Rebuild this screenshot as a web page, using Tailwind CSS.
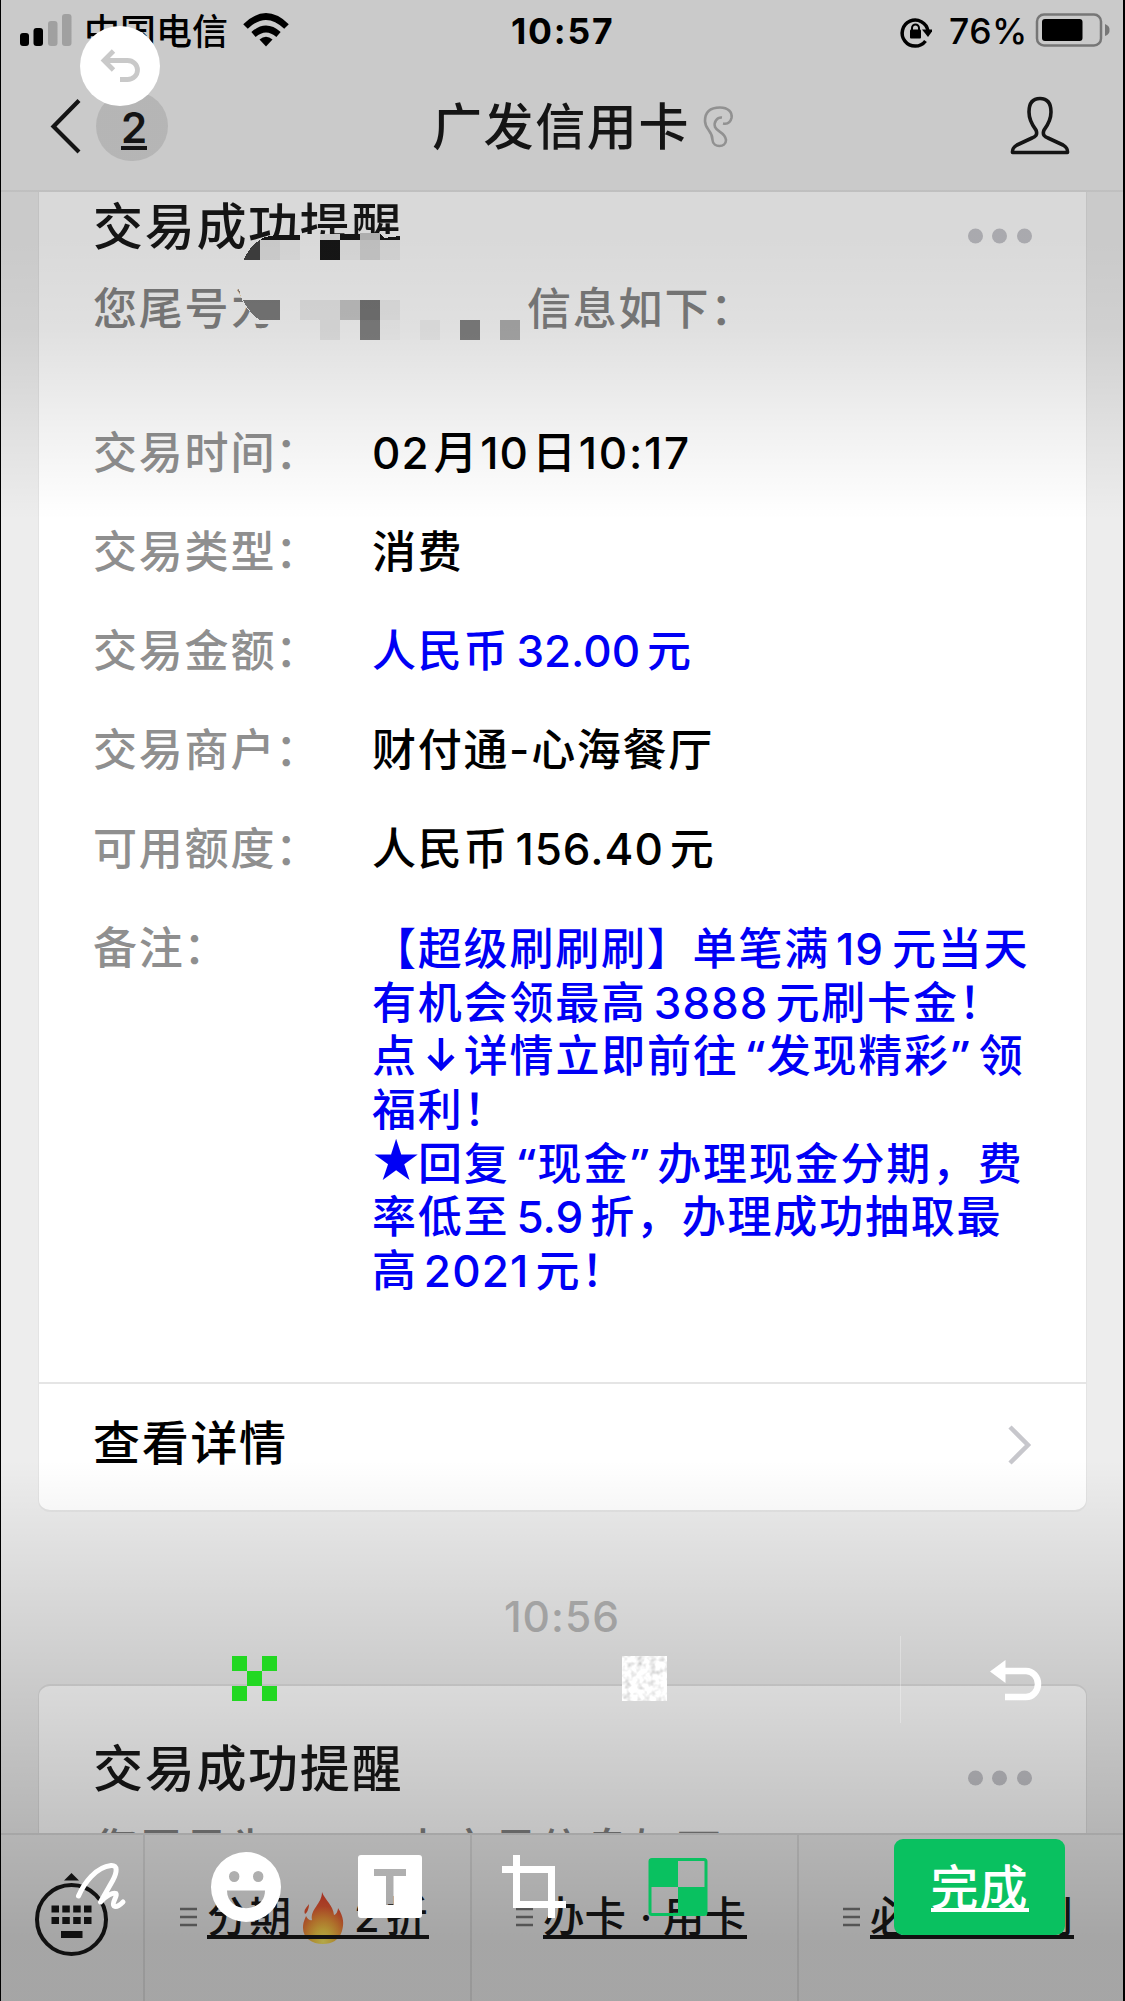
<!DOCTYPE html>
<html lang="zh-CN">
<head>
<meta charset="utf-8">
<title>广发信用卡</title>
<script src="https://cdn.jsdelivr.net/npm/@tailwindcss/browser@4"></script>
</head>
<body class="bg-[#ededed]">
<div class="relative flex h-[2001px] w-[1125px] flex-col overflow-hidden border-l border-r-2 border-black bg-[#ededed] font-['Inter','Noto_Sans_CJK_SC',sans-serif] text-black">

  <!-- status bar -->
  <div class="flex h-[62px] shrink-0 items-center pl-[19px]">
    <svg class="h-[62px] w-[64px] shrink-0" viewBox="20 0 64 62"><rect x="20" y="33" width="9" height="13" rx="3"/><rect x="33.5" y="28" width="9.5" height="18" rx="3"/><rect x="48" y="21" width="9.5" height="25" rx="3" fill="#bcbcbc"/><rect x="62" y="14" width="9.5" height="32" rx="3" fill="#bcbcbc"/></svg>
    <div class="mt-[2px] w-[159px] shrink-0 text-[36px] leading-[62px] font-medium whitespace-nowrap">中国电信</div>
    <svg class="h-[62px] w-[46px] shrink-0" viewBox="243 0 46 62"><g fill="none" stroke="#000" stroke-width="6.5"><path d="M245.500 26.500Q266 6.500 286.500 26.500"/><path d="M253.500 34.500Q266 23.500 278.500 34.500"/></g><path d="M266 46.500L259.500 39.500Q266 34 272.500 39.500Z"/></svg>
    <div class="mt-[1px] ml-[222px] w-[387px] shrink-0 text-[35.500px] leading-[62px] font-bold tracking-[1.800px]">10:57</div>
    <svg class="h-[62px] w-[34px] shrink-0" viewBox="898 0 34 62"><path d="M925.500 41A13 13 0 1 1 928 31" fill="none" stroke="#000" stroke-width="3.500"/><path d="M922 29.500H933.500L928 37Z"/><rect x="910" y="29.500" width="11" height="9" rx="1"/><path d="M912 30V28a3.500 3.500 0 0 1 7 0V30" fill="none" stroke="#000" stroke-width="2"/></svg>
    <div class="mt-[1px] ml-[17px] w-[86px] shrink-0 text-[35.500px] leading-[62px] font-medium tracking-[0.500px]">76%</div>
    <svg class="h-[62px] w-[76px] shrink-0" viewBox="1035 0 76 62"><rect x="1037" y="14.500" width="64" height="31" rx="7" fill="none" stroke="#8b8b8b" stroke-width="2.500"/><rect x="1042" y="19" width="40.500" height="22" rx="3"/><path d="M1105 24q5 2 4.500 6q.5 4-4.500 6z" fill="#8b8b8b"/></svg>
  </div>

  <!-- navigation bar -->
  <div class="relative flex h-[130px] shrink-0 items-center border-b-2 border-[#e1e1e1] pl-[49px] text-[#181818]">
    <svg class="h-[56px] w-[32px]" viewBox="50 97 32 56"><path d="M79 99.500L53.500 125.500L79 151" fill="none" stroke="#181818" stroke-width="4.200"/></svg>
    <div class="ml-[14px] flex h-[70px] w-[72px] items-center justify-center rounded-full bg-[#d5d5d5] text-[42px] font-semibold"><span class="h-[41px] translate-x-[2px] translate-y-[3px] border-b-4 border-[#181818] leading-[37px]">2</span></div>
    <div class="mt-[2px] ml-[264px] w-[270px] shrink-0 text-[50px] leading-[62px] font-medium tracking-[1.600px] whitespace-nowrap">广发信用卡</div>
    <svg class="h-[46px] w-[34px]" viewBox="701 102 34 46"><path d="M721 116.500C716 116 712.500 121 714 126C716 131 724 131 725 139C725 147 712 147 711.500 139C711.500 129 704 129 704 120C704 109 711 106.500 719 106.500C727 106.500 731.500 111 730.500 117C729.500 121 727 123.500 722 122.500" fill="none" stroke="#aaaaaa" stroke-width="2.600"/></svg>
    <svg class="ml-[274px] h-[64px] w-[62px]" viewBox="1011 94 62 64"><path d="M1041 98.500C1033 98.500 1030 104 1030 112C1030 121 1034 126 1037 130C1039 135 1036 137 1033 138L1018 145C1013 148 1013.500 150 1013.500 152.500H1068.500C1068.500 150 1069 148 1064 145L1049 138C1046 137 1043 135 1045 130C1048 126 1052 121 1052 112C1052 104 1049 98.500 1041 98.500Z" fill="none" stroke="#181818" stroke-width="3.600" stroke-linejoin="round"/></svg>
  </div>

  <!-- transaction card -->
  <div class="relative ml-[37px] flex h-[1320px] w-[1049px] shrink-0 flex-col rounded-b-[12px] border-x border-b-2 border-[#e4e4e4] bg-white pl-[54px]">
    <div class="mt-[3px] flex items-center">
      <div class="w-[874px] text-[50px] leading-[64px] font-medium tracking-[1.700px] whitespace-nowrap text-[#181818]">交易成功提醒</div>
      <svg class="mt-[18px] h-[16px] w-[66px]" viewBox="967 228 66 16" fill="#c7c7cc"><circle cx="975.500" cy="236" r="7.500"/><circle cx="999.500" cy="236" r="7.500"/><circle cx="1024.500" cy="236" r="7.500"/></svg>
    </div>
    <div class="mt-[18px] flex text-[44px] leading-[64px] font-medium tracking-[1.800px] whitespace-nowrap text-[#858585]"><span class="w-[434px]">您尾号为</span><span>信息如下：</span></div>
    <svg class="absolute top-[40px] left-[195px] h-[114px] w-[300px]" viewBox="234 232 300 114" shape-rendering="crispEdges">
      <path fill="#fff" d="M300 234H402V260H243Q252 246 265 240H300ZM238 286H522V345H269V324H263Q252 316 243 303Z"/>
      <path fill="#464646" d="M243.500 260Q250 246 260 240V260Z"/><path fill="#191919" d="M265 237L275 235H300V240H260ZM340 234H360V240H340ZM380 234L384 238L400 236V240H380ZM320 240H340V260H320Z"/>
      <rect x="260" y="240" width="20" height="20" fill="#ebebeb"/><rect x="280" y="240" width="20" height="20" fill="#f6f6f6"/><rect x="340" y="240" width="20" height="20" fill="#f6f6f6"/><rect x="320" y="234" width="20" height="6" fill="#ebebeb"/><rect x="360" y="233" width="20" height="7" fill="#cccccc"/><rect x="360" y="240" width="20" height="20" fill="#dedede"/><rect x="380" y="240" width="20" height="20" fill="#f2f2f2"/>
      <path fill="#7f7f7f" d="M243 300H280V320H260Q250 314 243 300Z"/><rect x="300" y="300" width="40" height="20" fill="#efefef"/><rect x="340" y="300" width="20" height="20" fill="#cbcbcb"/><rect x="360" y="300" width="20" height="20" fill="#797979"/><rect x="380" y="300" width="20" height="20" fill="#f2f2f2"/>
      <rect x="320" y="320" width="20" height="20" fill="#ededed"/><rect x="360" y="320" width="20" height="20" fill="#858585"/><rect x="380" y="320" width="20" height="20" fill="#fafafa"/><rect x="420" y="320" width="20" height="20" fill="#f5f5f5"/><rect x="460" y="320" width="20" height="20" fill="#858585"/><rect x="500" y="320" width="20" height="20" fill="#b2b2b2"/>
    </svg>

    <div class="mt-[80px] grid grid-cols-[279px_1fr] text-[44px] font-medium tracking-[1.800px] whitespace-nowrap">
      <div class="h-[99px] leading-[64px] text-[#8f8f8f]">交易时间<span class="-ml-[1px]">：</span></div><div class="leading-[64px]"><span class="tracking-[1px]">02</span><span class="ml-[4px]">月</span><span class="ml-[1px] tracking-[1px]">10</span><span class="ml-[3px]">日</span><span class="ml-[1px] tracking-[1.700px]">10:17</span></div>
      <div class="h-[99px] leading-[64px] text-[#8f8f8f]">交易类型<span class="-ml-[1px]">：</span></div><div class="leading-[64px]">消费</div>
      <div class="h-[99px] leading-[64px] text-[#8f8f8f]">交易金额<span class="-ml-[1px]">：</span></div><div class="leading-[64px] text-[#0000f5]">人民币<span class="mx-[7px] tracking-[0px]">32.00</span>元</div>
      <div class="h-[99px] leading-[64px] text-[#8f8f8f]">交易商户<span class="-ml-[1px]">：</span></div><div class="leading-[64px] tracking-[1.700px]">财付通-心海餐厅</div>
      <div class="h-[99px] leading-[64px] text-[#8f8f8f]">可用额度<span class="-ml-[1px]">：</span></div><div class="leading-[64px]">人民币<span class="mx-[6px] tracking-[1px]">156.40</span>元</div>
      <div class="leading-[64px] text-[#8f8f8f]">备注<span class="-ml-[1px]">：</span></div>
      <div class="mt-[7px] leading-[53.700px] text-[#0000f5]">
        <div class="h-[53.700px]">【超级刷刷刷】单笔满<span class="mr-[8px] ml-[6px] tracking-[1px]">19</span>元当天</div>
        <div class="h-[53.700px]">有机会领最高<span class="mx-[7px] tracking-[1px]">3888</span>元刷卡金！</div>
        <div class="h-[53.700px]">点<span class="inline-block w-[46px]"><svg class="mx-auto h-[36px] w-[30px]" viewBox="0 0 30 36"><path d="M15 2V32M3 20L15 32L27 20" fill="none" stroke="#0000f5" stroke-width="4.500"/></svg></span>详情立即前往<span class="inline-block w-[28px] pr-[2px] text-right font-['Open_Sans'] leading-[30px] font-semibold tracking-normal">“</span>发现精彩<span class="inline-block w-[29px] pl-[2px] font-['Open_Sans'] leading-[30px] font-semibold tracking-normal">”</span>领</div>
        <div class="h-[53.700px]">福利！</div>
        <div class="h-[53.700px]"><span class="inline-block w-[46px] text-[50px] leading-[30px] tracking-[-4px]"><span class="-ml-[2px]">★</span></span>回复<span class="inline-block w-[28px] pr-[2px] text-right font-['Open_Sans'] leading-[30px] font-semibold tracking-normal">“</span>现金<span class="inline-block w-[28px] pl-[2px] font-['Open_Sans'] leading-[30px] font-semibold tracking-normal">”</span>办理现金分期，费</div>
        <div class="h-[53.700px]">率低至<span class="mx-[7px] tracking-[0px]">5.9</span>折，办理成功抽取最</div>
        <div class="h-[53.700px]">高<span class="mx-[6px] tracking-[1.200px]">2021</span>元！</div>
      </div>
    </div>

    <div class="absolute inset-x-0 bottom-0 flex h-[128px] items-center border-t-2 border-[#e5e5e5] pb-[8px] pl-[54px]">
      <div class="w-[914px] text-[47px] leading-[64px] font-medium tracking-[1.700px] whitespace-nowrap">查看详情</div>
      <svg class="mt-[4px] h-[40px] w-[26px]" viewBox="0 0 26 40"><path d="M3 2L21 20L3 38" fill="none" stroke="#c7c7cc" stroke-width="4.500"/></svg>
    </div>
  </div>

  <div class="h-[172px] shrink-0 pt-[74px] text-center text-[42.500px] leading-[62px] font-medium tracking-[1px] text-[#b4b4b4]">10:56</div>

  <!-- next card -->
  <div class="ml-[37px] flex h-[149px] w-[1049px] shrink-0 flex-col overflow-hidden rounded-t-[12px] border-x border-t-2 border-[#e0e0e0] bg-white pl-[54px]">
    <div class="mt-[51px] flex items-center">
      <div class="w-[874px] text-[50px] leading-[64px] font-medium tracking-[1.700px] whitespace-nowrap text-[#181818]">交易成功提醒</div>
      <svg class="mt-[18px] h-[16px] w-[66px]" viewBox="967 228 66 16" fill="#c7c7cc"><circle cx="975.500" cy="236" r="7.500"/><circle cx="999.500" cy="236" r="7.500"/><circle cx="1024.500" cy="236" r="7.500"/></svg>
    </div>
    <div class="mt-[17px] flex text-[44px] leading-[64px] font-medium tracking-[1.800px] whitespace-nowrap text-[#858585]"><span class="w-[309px]">您尾号为</span><span>卡交易信息如下：</span></div>
  </div>

  <!-- official account menu -->
  <div class="grid h-[168px] shrink-0 grid-cols-[144px_327px_327px_1fr] border-t-2 border-[#dadada] text-[41.500px] font-medium whitespace-nowrap text-[#181818]">
    <div class="border-r-2 border-[#dadada]">
      <svg class="mt-[36px] ml-[32px] h-[90px] w-[78px]" viewBox="33 1871 78 90"><path d="M71.500 1873L79 1880.500H64Z" fill="#181818"/><circle cx="71.500" cy="1919.500" r="34.500" fill="none" stroke="#181818" stroke-width="4"/><path fill="#181818" d="M51.500 1905.500h7.500v7h-7.500zM62.300 1905.500h7.500v7h-7.500zM73.200 1905.500h7.500v7h-7.500zM84 1905.500h7.500v7h-7.500zM51.500 1917h7.500v7h-7.500zM62.300 1917h7.500v7h-7.500zM73.200 1917h7.500v7h-7.500zM84 1917h7.500v7h-7.500zM61 1931h21.500v7h-21.500z"/></svg>
    </div>
    <div class="flex border-r-2 border-[#dadada] pt-[52px] pl-[35px]">
      <svg class="mt-[20px] mr-[10px] h-[20px] w-[17px]" viewBox="0 0 17 20"><path d="M0 2H17M0 10H17M0 18H17" stroke="#777" stroke-width="2.400"/></svg>
      <div class="relative flex h-[52px] w-[222px] leading-[60px]"><span class="w-[95px] tracking-[1px]">分期</span><svg class="mt-[4px] h-[54px] w-[42px] shrink-0" viewBox="0 0 42 54"><defs><radialGradient id="flame" cx=".5" cy=".95" r=".9"><stop offset="0" stop-color="#fff06a"/><stop offset=".25" stop-color="#fbd24a"/><stop offset=".5" stop-color="#f59a3c"/><stop offset=".75" stop-color="#ea5a35"/><stop offset="1" stop-color="#e4452f"/></radialGradient></defs><path d="M20 1C23 9 31 14 32 24C34 24 36 20 36 17C42 26 42 33 40 40C37 49 30 53 21 53C10 53 1 47 1 37C1 31 3 28 4 25C6 29 9 30 10 29C8 18 20 13 20 1Z" fill="url(#flame)"/><path d="M7 13C5 16 1 19 3 23C5 22 7 18 7 13Z" fill="#e8542f"/></svg><span class="ml-[10px] w-[32px]">2</span><span>折</span><i class="absolute inset-x-0 bottom-0 h-[4px] bg-[#181818]"></i></div>
    </div>
    <div class="flex border-r-2 border-[#dadada] pt-[52px] pl-[44px]">
      <svg class="mt-[20px] mr-[10px] h-[20px] w-[17px]" viewBox="0 0 17 20"><path d="M0 2H17M0 10H17M0 18H17" stroke="#777" stroke-width="2.400"/></svg>
      <div class="flex h-[52px] w-[204px] border-b-4 border-[#181818] leading-[60px]"><span class="w-[86px]">办卡</span><span class="w-[34px] text-center">·</span><span>用卡</span></div>
    </div>
    <div class="flex pt-[52px] pl-[44px]">
      <svg class="mt-[20px] mr-[10px] h-[20px] w-[17px]" viewBox="0 0 17 20"><path d="M0 2H17M0 10H17M0 18H17" stroke="#777" stroke-width="2.400"/></svg>
      <div class="flex h-[52px] w-[204px] border-b-4 border-[#181818] leading-[60px]"><span class="w-[86px]">必看</span><span class="w-[34px] text-center">·</span><span>福利</span></div>
    </div>
  </div>

  <!-- editor scrims -->
  <div class="absolute inset-x-0 top-0 h-[520px] bg-[linear-gradient(to_bottom,rgba(0,0,0,.15)_0px,rgba(0,0,0,.15)_240px,rgba(0,0,0,.12)_330px,rgba(0,0,0,.055)_430px,rgba(0,0,0,0)_520px)]"></div>
  <div class="absolute inset-x-0 bottom-0 h-[541px] bg-[linear-gradient(to_bottom,rgba(0,0,0,0)_0px,rgba(0,0,0,.04)_60px,rgba(0,0,0,.15)_230px,rgba(0,0,0,.235)_370px,rgba(0,0,0,.3)_480px)]"></div>

  <!-- editor cancel button -->
  <div class="absolute top-[26px] left-[79px] h-[80px] w-[80px] rounded-full bg-white">
    <svg class="h-[80px] w-[80px]" viewBox="80 26 80 80"><path d="M113.500 51L104 60.500L113.500 70M104 60.500H127.500A10 9.500 0 0 1 127.500 79.500H120" fill="none" stroke="#c9c9c9" stroke-width="4.800"/></svg>
  </div>

  <!-- mosaic styles and editor tools -->
  <svg class="absolute top-[1630px] left-[-1px] h-[371px] w-[1125px]" viewBox="0 1630 1125 371">
    <defs><filter id="grain" x="0" y="0" width="1" height="1"><feTurbulence type="fractalNoise" baseFrequency=".16" numOctaves="2" seed="4"/><feColorMatrix values=".9 0 0 0 .5 .9 0 0 0 .5 .9 0 0 0 .5 0 0 0 0 1"/></filter></defs>
    <path fill="#22d822" d="M232 1656h15v15h-15zM262 1656h15v15h-15zM247 1671h15v15h-15zM232 1686h15v15h-15zM262 1686h15v15h-15z"/>
    <rect x="622" y="1656" width="45" height="45" filter="url(#grain)"/>
    <path d="M900.500 1636V1723" stroke="#fff" stroke-opacity=".3"/>
    <path d="M1005 1671H1026A12 13 0 0 1 1026 1697H1005" fill="none" stroke="#fff" stroke-width="6.500"/><path d="M990 1671.500L1005.500 1660V1683Z" fill="#fff"/>
    <path d="M78.500 1896C84 1883 96 1867 111 1865.500C118 1865 117 1872 113 1880L100.500 1902C106 1896 113 1892 116 1893.500C118 1896 111 1903 114 1906C117 1908 121 1904 123 1902" fill="none" stroke="#fff" stroke-width="5" stroke-linecap="round" stroke-linejoin="round"/>
    <path fill="#fff" fill-rule="evenodd" d="M211 1887a35 35 0 1 1 70 0a35 35 0 1 1-70 0ZM229 1876.500a5.200 5.500 0 1 0 10.400 0a5.200 5.500 0 1 0-10.400 0ZM253 1876.500a5.200 5.500 0 1 0 10.400 0a5.200 5.500 0 1 0-10.400 0ZM227 1890.500H265C265 1914 227 1914 227 1890.500Z"/>
    <path fill="#fff" fill-rule="evenodd" d="M361 1855H419Q422 1855 422 1858V1915Q422 1918 419 1918H361Q358 1918 358 1915V1858Q358 1855 361 1855ZM374 1869V1876H386V1905H393.500V1876H406V1869Z"/>
    <path d="M516.500 1855V1904.500H566M502 1869.500H551.500V1918" fill="none" stroke="#fff" stroke-width="7"/>
    <rect x="650" y="1859.500" width="56" height="55" rx="2" fill="none" stroke="#09c160" stroke-width="3"/><path fill="#09c160" d="M649 1859h29v28h-29zM678 1887h28v28h-28z"/>
  </svg>
  <div class="absolute top-[1839px] left-[893px] flex h-[96px] w-[171px] justify-center rounded-[9px] bg-[#09c160] text-white">
    <span class="mt-[17px] h-[56px] w-[98px] border-b-4 border-white text-[48px] leading-[63px] font-medium tracking-[1px] whitespace-nowrap">完成</span>
  </div>
</div>
</body>
</html>
